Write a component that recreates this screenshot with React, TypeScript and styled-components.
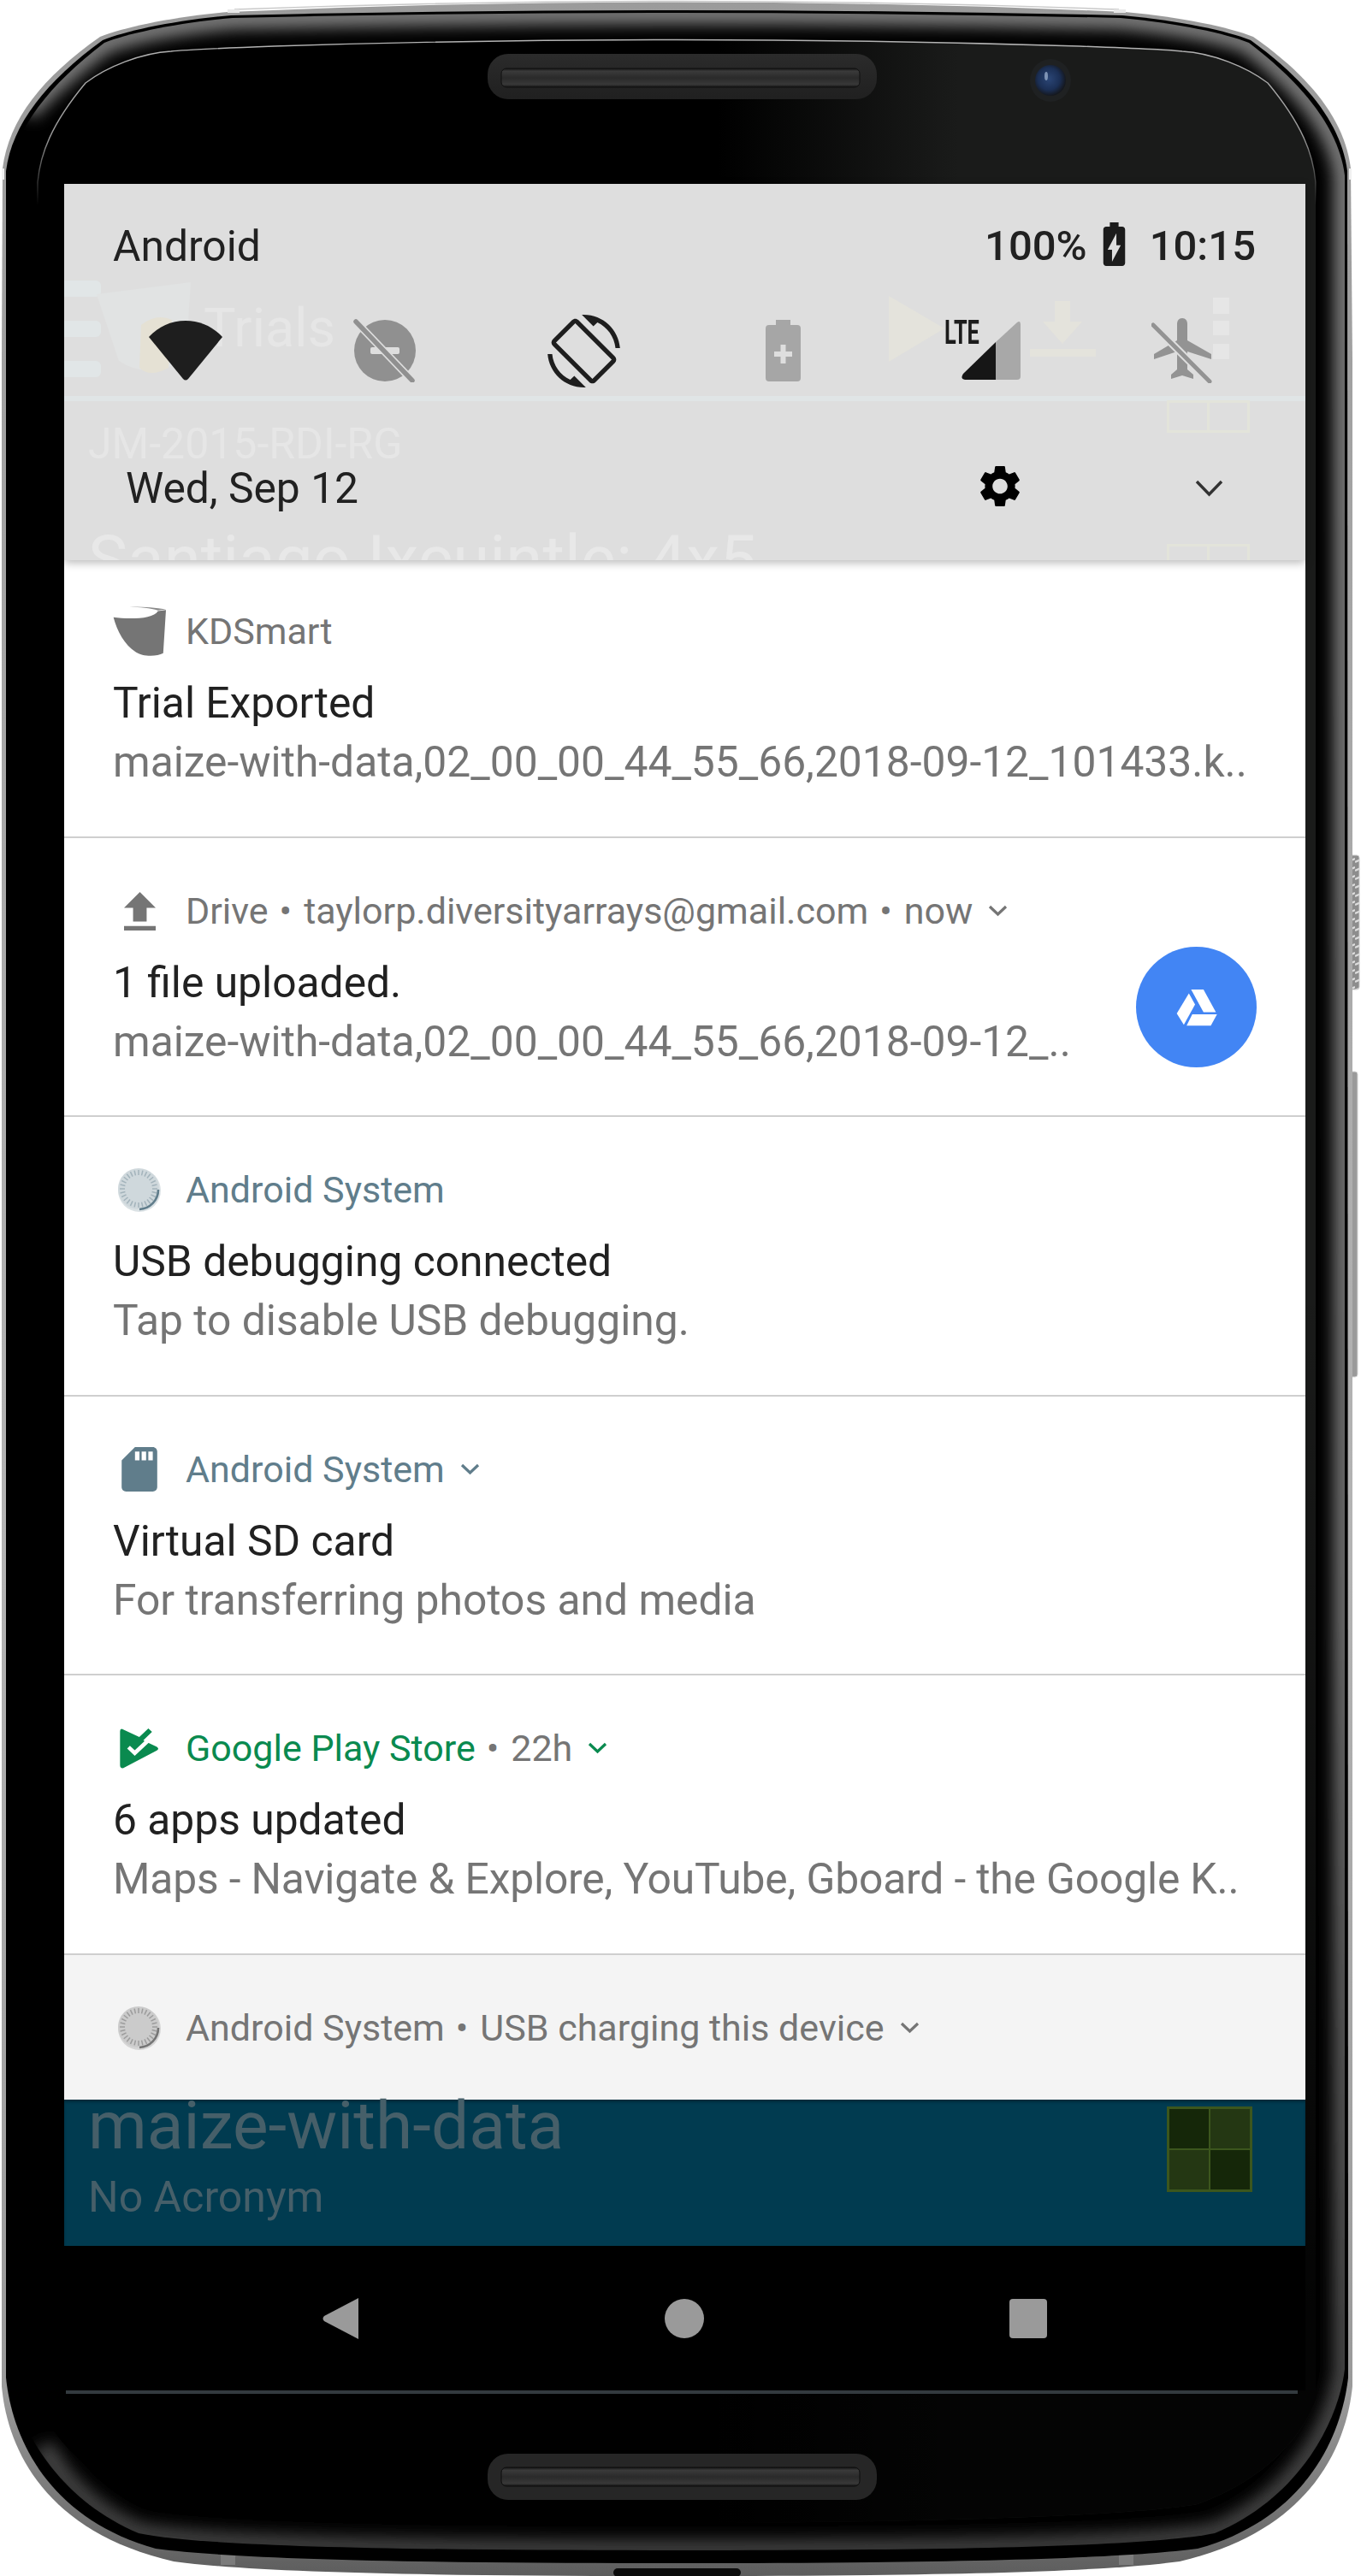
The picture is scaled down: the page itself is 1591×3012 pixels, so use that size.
import React from 'react';
import styled, { createGlobalStyle } from 'styled-components';

const GlobalStyle = createGlobalStyle`
  html, body {
    margin: 0;
    padding: 0;
    background: #ffffff;
    font-family: Roboto, "Liberation Sans", sans-serif;
  }
`;

const Frame = styled.div`
  position: relative;
  width: 1591px;
  height: 3012px;
  box-sizing: border-box;
  padding: 215px 65px 0 75px;
  overflow: hidden;
`;

const FrameArt = styled.svg`
  position: absolute;
  top: 0;
  left: 0;
`;

const Screen = styled.div`
  position: relative;
  display: flex;
  flex-direction: column;
  width: 1451px;
`;

/* quick settings shade */
const Shade = styled.header`
  position: relative;
  z-index: 1;
  height: 440px;
  background: #dedede;
  overflow: hidden;
  box-shadow: 0 3px 10px rgba(0, 0, 0, 0.28);
`;

const GhostMenu = styled.div`
  position: absolute;
  left: 0;
  top: 113px;
  display: flex;
  flex-direction: column;
  gap: 28px;
`;

const GhostBar = styled.div`
  width: 43px;
  height: 19px;
  border-radius: 0 6px 6px 0;
  background: #e1e6e7;
`;

const GhostBucket = styled.svg`
  position: absolute;
  left: 38px;
  top: 115px;
`;

const GhostTrials = styled.div`
  position: absolute;
  left: 163px;
  top: 134px;
  font-size: 63px;
  line-height: 70px;
  color: #e6e6e6;
`;

const GhostRule = styled.div`
  position: absolute;
  left: 0;
  right: 0;
  top: 248px;
  height: 6px;
  background: #e0e5e6;
`;

const GhostCode = styled.div`
  position: absolute;
  left: 28px;
  top: 276px;
  font-size: 50px;
  line-height: 56px;
  color: #e6e6e6;
`;

const GhostPlace = styled.div`
  position: absolute;
  left: 28px;
  top: 400px;
  font-size: 78px;
  line-height: 80px;
  color: #e8e8e8;
`;

const GhostAction = styled.svg`
  position: absolute;
  left: 960px;
  top: 130px;
`;

const GhostThumb = styled.div<{ $top: number; $height: number }>`
  position: absolute;
  left: 1289px;
  top: ${(p) => p.$top}px;
  width: 97px;
  height: ${(p) => p.$height}px;
  box-sizing: border-box;
  border: 3px solid #e3e4da;
  background: linear-gradient(90deg, transparent 48%, #e3e4da 48%, #e3e4da 52%, transparent 52%);
`;

const ShadeContent = styled.div`
  position: relative;
  display: flex;
  flex-direction: column;
  height: 100%;
`;

const StatusRow = styled.div`
  display: flex;
  align-items: center;
  justify-content: space-between;
  height: 146px;
  padding: 0 58px 0 57px;
  font-size: 49.75px;
  line-height: 146px;
  color: #212121;
`;

const StatusRight = styled.div`
  display: flex;
  align-items: center;
  font-size: 49px;
  font-weight: 500;
`;

const BatteryIcon = styled.svg`
  margin: -5px 27px 0 17px;
`;

const QuickRow = styled.div`
  display: grid;
  grid-template-columns: repeat(6, 233px);
  justify-items: center;
  align-items: center;
  height: 98px;
  padding-left: 25px;
`;

const SignalGroup = styled.div`
  position: relative;
  display: flex;
  justify-content: flex-end;
  width: 89px;
  height: 70px;
`;

const LteLabel = styled.span`
  position: absolute;
  left: -11px;
  top: -6px;
  font-size: 39px;
  line-height: 40px;
  font-weight: 700;
  color: #1c1c1c;
  transform: scaleX(0.65);
`;

const DateRow = styled.div`
  display: flex;
  align-items: center;
  height: 168px;
  margin-top: 28px;
  padding: 0 96px 0 72px;
  font-size: 49.75px;
  color: #212121;
`;

const DateText = styled.span`
  flex: 1;
`;

const GearIcon = styled.svg`
  margin: -5px 205px 0 0;
`;

/* notification list */
const Row = styled.article<{ $first?: boolean; $height: number }>`
  display: flex;
  justify-content: space-between;
  box-sizing: border-box;
  height: ${(p) => p.$height}px;
  padding: ${(p) => (p.$first ? 53 : 55)}px 57px 0;
  background: #ffffff;
  border-bottom: 2px solid #cfcfcf;
`;

const SilentRow = styled.article`
  box-sizing: border-box;
  height: 169px;
  padding: 55px 57px 0;
  background: #f4f4f4;
`;

const RowBody = styled.div`
  min-width: 0;
`;

const RowHead = styled.div`
  display: flex;
  align-items: center;
  height: 60px;
  font-size: 43px;
  color: #757575;
  white-space: nowrap;
`;

const IconSlot = styled.div`
  display: flex;
  justify-content: center;
  align-items: center;
  flex: none;
  width: 62px;
  height: 60px;
  margin-right: 23px;
`;

const AppName = styled.span<{ $color?: string }>`
  color: ${(p) => p.$color || '#757575'};
`;

const Dot = styled.span`
  margin: 0 14px 0 13px;
  color: #757575;
`;

const Meta = styled.span`
  color: #757575;
`;

const Caret = styled.svg`
  flex: none;
  margin-left: 18px;
`;

const Title = styled.div`
  margin-top: 19px;
  font-size: 49.75px;
  line-height: 70px;
  color: #212121;
  white-space: nowrap;
`;

const Detail = styled.div`
  font-size: 49.75px;
  line-height: 68px;
  color: #757575;
  white-space: nowrap;
`;

const TightDetail = styled(Detail)`
  letter-spacing: -0.15px;
`;

const DriveBadge = styled.div`
  display: flex;
  align-items: center;
  justify-content: center;
  flex: none;
  width: 141px;
  height: 141px;
  margin-top: 72px;
  border-radius: 50%;
  background: #4285f4;
`;

/* app showing behind the shade */
const BehindStrip = styled.section`
  display: flex;
  justify-content: space-between;
  box-sizing: border-box;
  height: 171px;
  padding: 8px 62px 0 28px;
  background: #013b50;
  box-shadow: inset 0 3px 3px rgba(0, 0, 0, 0.25);
`;

const TrialName = styled.div`
  margin-top: -18px;
  font-size: 78.5px;
  line-height: 80px;
  color: #465f69;
`;

const TrialSub = styled.div`
  margin-top: 16px;
  font-size: 50px;
  line-height: 56px;
  color: #465f69;
`;

const ThumbGrid = styled.div`
  display: grid;
  grid-template-columns: 1fr 1fr;
  grid-template-rows: 1fr 1fr;
  gap: 2px;
  box-sizing: border-box;
  width: 100px;
  height: 100px;
  padding: 3px;
  background: #3c561d;
`;

const ThumbCell = styled.div<{ $dark?: boolean }>`
  background: ${(p) => (p.$dark ? '#152709' : '#243713')};
`;

/* soft keys */
const NavBar = styled.nav`
  display: grid;
  grid-template-columns: repeat(3, 402px);
  justify-content: center;
  justify-items: center;
  align-items: center;
  height: 169px;
  padding-right: 2px;
  background: #000000;
`;

const HomeKey = styled.div`
  width: 46px;
  height: 46px;
  border-radius: 50%;
  background: #9a9a9a;
`;

const RecentsKey = styled.div`
  width: 44px;
  height: 46px;
  border-radius: 4px;
  background: #9a9a9a;
`;

const NavRule = styled.div`
  width: 1440px;
  height: 4px;
  margin-left: 2px;
  background: #333a3f;
`;

const Chevron = ({ color = '#757575' }: { color?: string }) => (
  <Caret width="23" height="14" viewBox="0 0 23 14">
    <polyline points="2,2 11.5,11 21,2" fill="none" stroke={color} strokeWidth="3.2" />
  </Caret>
);

const SystemDial = ({ disc, tick, rim }: { disc: string; tick: string; rim: string }) => (
  <svg width="52" height="52" viewBox="0 0 52 52">
    <circle cx="26" cy="27" r="25" fill={disc} opacity="0.75" />
    <circle cx="25" cy="25" r="24" fill={disc} />
    {Array.from({ length: 28 }).map((_, i) => {
      const a = (i / 28) * Math.PI * 2;
      return (
        <line
          key={i}
          x1={25 + Math.cos(a) * 16}
          y1={25 + Math.sin(a) * 16}
          x2={25 + Math.cos(a) * 22}
          y2={25 + Math.sin(a) * 22}
          stroke={tick}
          strokeWidth="1.5"
        />
      );
    })}
    <path d="M48 26 A 23 23 0 0 1 26 49" fill="none" stroke={rim} strokeWidth="2.6" />
  </svg>
);

const PhoneBody = () => {
  const outer =
    'M2 420 L3 197 C10 140 50 90 117 43 C145 32 200 20 267 14 Q791 -9 1315 14 C1382 20 1437 32 1465 43 C1532 90 1572 140 1579 197 L1581 420 L1581 2790 C1574 2860 1532 2960 1379 2995 C1282 3008 1082 3012 791 3012 C500 3012 300 3008 203 2995 C50 2960 8 2860 2 2790 Z';
  const band =
    'M7 420 L7 200 C14 145 54 95 120 47 C148 36 203 24 270 18 Q791 6 1312 18 C1379 24 1434 36 1462 47 C1528 95 1568 145 1575 200 L1576 2780 C1568 2850 1526 2945 1400 2980 C1300 2993 1082 2997 791 2997 C500 2997 282 2993 182 2980 C56 2945 14 2850 7 2780 Z';
  const bezel =
    'M10 420 L10 205 C17 150 58 99 122 50 C150 39 205 27 272 21 Q791 9 1310 21 C1377 27 1432 39 1460 50 C1524 99 1565 150 1572 205 L1572 2770 C1565 2830 1520 2920 1420 2962 C1340 2978 1100 2982 791 2982 C482 2982 240 2978 162 2962 C62 2920 17 2830 10 2770 Z';
  const glowArc =
    'M30 130 C58 99 100 65 122 50 C150 39 205 27 272 21 Q791 9 1310 21 C1377 27 1432 39 1460 50 C1524 99 1565 150 1572 205 L1572 2770 C1565 2830 1520 2920 1420 2962 C1340 2978 1100 2982 791 2982 C482 2982 240 2978 162 2962 C110 2940 70 2900 50 2860';
  const glass =
    'M44 213 C47 180 60 145 100 97 C125 78 165 62 200 60 C215 58 240 57 320 54 Q791 39 1262 54 C1342 57 1367 58 1382 60 C1417 62 1457 78 1482 97 C1522 145 1535 180 1538 213 L1538 2807 C1525 2840 1490 2895 1400 2928 C1300 2945 1000 2950 791 2950 C582 2950 282 2945 182 2928 C92 2895 57 2840 44 2807 Z';

  return (
    <FrameArt width="1591" height="3012" viewBox="0 0 1591 3012">
      <defs>
        <linearGradient id="metal" gradientUnits="userSpaceOnUse" x1="0" y1="0" x2="0" y2="3012">
          <stop offset="0" stopColor="#9b9b9b" />
          <stop offset="0.6" stopColor="#b4b4b4" />
          <stop offset="0.93" stopColor="#9a9a9a" />
          <stop offset="0.985" stopColor="#6b6b6b" />
          <stop offset="1" stopColor="#5d5d5d" />
        </linearGradient>
        <linearGradient id="edgeGlow" gradientUnits="userSpaceOnUse" x1="0" y1="0" x2="0" y2="3012">
          <stop offset="0" stopColor="#7d7d7d" />
          <stop offset="0.62" stopColor="#707070" />
          <stop offset="0.9" stopColor="#4a4a4a" />
          <stop offset="1" stopColor="#3c3c3c" />
        </linearGradient>
        <linearGradient id="leftGlow" gradientUnits="userSpaceOnUse" x1="0" y1="0" x2="0" y2="3012">
          <stop offset="0" stopColor="#3a3a3a" />
          <stop offset="0.1" stopColor="#666666" />
          <stop offset="0.85" stopColor="#585858" />
          <stop offset="0.95" stopColor="#000000" />
        </linearGradient>
        <linearGradient id="glassFill" gradientUnits="userSpaceOnUse" x1="840" y1="0" x2="1120" y2="0">
          <stop offset="0" stopColor="#000000" />
          <stop offset="1" stopColor="#1a1b1a" />
        </linearGradient>
        <linearGradient id="glassFade" gradientUnits="userSpaceOnUse" x1="0" y1="1500" x2="0" y2="2700">
          <stop offset="0" stopColor="#000000" stopOpacity="0" />
          <stop offset="1" stopColor="#000000" stopOpacity="0.85" />
        </linearGradient>
        <linearGradient id="glassLine" gradientUnits="userSpaceOnUse" x1="0" y1="40" x2="0" y2="240">
          <stop offset="0" stopColor="#b5b5b5" />
          <stop offset="0.6" stopColor="#999999" />
          <stop offset="1" stopColor="#999999" stopOpacity="0" />
        </linearGradient>
        <linearGradient id="grille" x1="0" y1="0" x2="0" y2="1">
          <stop offset="0" stopColor="#161616" />
          <stop offset="0.15" stopColor="#3a3a3a" />
          <stop offset="0.5" stopColor="#2a2a2a" />
          <stop offset="0.85" stopColor="#383838" />
          <stop offset="1" stopColor="#141414" />
        </linearGradient>
        <linearGradient id="speakerWell" x1="0" y1="0" x2="0" y2="1">
          <stop offset="0" stopColor="#2b2b2b" />
          <stop offset="1" stopColor="#202020" />
        </linearGradient>
        <radialGradient id="lens" cx="0.45" cy="0.45" r="0.55">
          <stop offset="0" stopColor="#2b4676" />
          <stop offset="0.65" stopColor="#1b2f55" />
          <stop offset="1" stopColor="#15181f" />
        </radialGradient>
        <pattern id="ridges" width="9" height="10" patternUnits="userSpaceOnUse">
          <rect width="9" height="10" fill="#8d8d8d" />
          <path d="M0 8 L9 4" stroke="#dddddd" strokeWidth="2.4" />
        </pattern>
        <clipPath id="bezelClip">
          <path d={bezel} />
        </clipPath>
        <filter id="soft" x="-5%" y="-5%" width="110%" height="110%">
          <feGaussianBlur stdDeviation="9" />
        </filter>
      </defs>

      <rect x="1578" y="1000" width="11" height="157" rx="3" fill="url(#ridges)" stroke="#cccccc" />
      <rect x="1578" y="1253" width="9" height="357" rx="3" fill="#9a9a9a" stroke="#d5d5d5" />

      <path d={outer} fill="url(#metal)" />
      <path d="M274 11 Q791 -8 1308 11" fill="none" stroke="#c9c9c9" strokeWidth="1.5" />
      <rect x="266" y="11" width="14" height="4" fill="#e8e8e8" />
      <rect x="1302" y="11" width="14" height="4" fill="#e8e8e8" />
      <rect x="2" y="197" width="3" height="13" fill="#f0f0f0" />
      <rect x="1577" y="197" width="3" height="13" fill="#f0f0f0" />
      <rect x="258" y="2985" width="17" height="14" fill="#7c7c7c" />
      <rect x="1308" y="2985" width="17" height="14" fill="#7c7c7c" />

      <path d={band} fill="#000000" />
      <g clipPath="url(#bezelClip)">
        <path d={glowArc} fill="none" stroke="url(#edgeGlow)" strokeWidth="26" filter="url(#soft)" />
        <path d="M44 190 L44 2807" fill="none" stroke="url(#leftGlow)" strokeWidth="22" filter="url(#soft)" />
      </g>
      <path d={glass} fill="url(#glassFill)" />
      <path d={glass} fill="url(#glassFade)" />
      <path d={glass} fill="none" stroke="url(#glassLine)" strokeWidth="1.4" />

      <rect x="570" y="63" width="455" height="53" rx="24" fill="url(#speakerWell)" />
      <rect x="586" y="80" width="419" height="22" rx="6" fill="url(#grille)" stroke="#111111" />
      <rect x="570" y="2869" width="455" height="54" rx="24" fill="#262626" />
      <rect x="586" y="2885" width="419" height="22" rx="6" fill="url(#grille)" stroke="#0d0d0d" />

      <ellipse cx="1228" cy="94" rx="24" ry="25" fill="#1f2122" />
      <circle cx="1228" cy="94" r="18" fill="url(#lens)" />
      <ellipse cx="1223" cy="89" rx="2" ry="5" fill="#7f94b5" />

      <rect x="717" y="3003" width="149" height="10" rx="5" fill="#0c0c0c" />
    </FrameArt>
  );
};

export default function App() {
  return (
    <>
      <GlobalStyle />
      <Frame>
        <PhoneBody />
        <Screen>
          <Shade>
            <GhostMenu>
              <GhostBar />
              <GhostBar />
              <GhostBar />
            </GhostMenu>
            <GhostBucket width="112" height="107" viewBox="0 0 112 107">
              <path d="M0 14 L110 0 L104 90 Q60 115 26 92 Z" fill="#e1e3e3" />
              <path d="M52 50 Q70 36 88 44 L84 100 Q62 112 50 100 Z" fill="#e5e1d4" />
            </GhostBucket>
            <GhostTrials>Trials</GhostTrials>
            <GhostRule />
            <GhostCode>JM-2015-RDI-RG</GhostCode>
            <GhostPlace>Santiago Ixcuintle: 4x5</GhostPlace>
            <GhostAction width="430" height="90" viewBox="0 0 430 90">
              <polygon points="4,1 69,39 4,78" fill="#e4e3dc" />
              <path d="M198 7 H216 V31 H230 L207 57 L184 31 H198 Z" fill="#e4e3dc" />
              <rect x="169" y="63" width="77" height="9" fill="#e4e3dc" />
              <rect x="383" y="3" width="19" height="19" fill="#e6e6e6" />
              <rect x="383" y="30" width="19" height="17" fill="#e6e6e6" />
              <rect x="383" y="57" width="19" height="18" fill="#e6e6e6" />
            </GhostAction>
            <GhostThumb $top={253} $height={38} />
            <GhostThumb $top={421} $height={60} />

            <ShadeContent>
              <StatusRow>
                <span>Android</span>
                <StatusRight>
                  <span>100%</span>
                  <BatteryIcon width="29" height="51" viewBox="7 2 10 20">
                    <path
                      d="M15.67 4H14V2h-4v2H8.33C7.6 4 7 4.6 7 5.33v15.33C7 21.4 7.6 22 8.33 22h7.33c.74 0 1.34-.6 1.34-1.33V5.33C17 4.6 16.4 4 15.67 4zM11 20v-5.5H9L13 7v5.5h2L11 20z"
                      fill="#1c1c1c"
                    />
                  </BatteryIcon>
                  <span>10:15</span>
                </StatusRight>
              </StatusRow>

              <QuickRow>
                <svg width="86" height="70" viewBox="0 0 86 70">
                  <path d="M43 0 C60 0 75 7 86 19 L46 68 Q43 71 40 68 L0 19 C11 7 26 0 43 0 Z" fill="#1e1e1e" />
                </svg>
                <svg width="75" height="74" viewBox="0 0 75 74">
                  <circle cx="38" cy="37" r="36" fill="#909090" />
                  <rect x="21" y="33" width="34" height="8" rx="2" fill="#dedede" />
                  <line x1="4" y1="3" x2="70" y2="72" stroke="#dedede" strokeWidth="9" />
                  <line x1="4" y1="3" x2="70" y2="72" stroke="#909090" strokeWidth="5.5" strokeLinecap="round" />
                </svg>
                <svg width="85" height="85" viewBox="0 0 24 24">
                  <path
                    d="M16.48 2.52c3.27 1.55 5.61 4.72 5.97 8.48h1.5C23.44 4.84 18.29 0 12 0l-.66.03 3.81 3.81 1.33-1.32zm-6.25-.77c-.59-.59-1.54-.59-2.12 0L1.75 8.11c-.59.59-.59 1.54 0 2.12l12.02 12.02c.59.59 1.54.59 2.12 0l6.36-6.36c.59-.59.59-1.54 0-2.12L10.23 1.75zm4.6 19.44L2.81 9.17l6.36-6.36 12.02 12.02-6.36 6.36zm-7.31.29C4.25 19.94 1.91 16.76 1.55 13H.05C.56 19.16 5.71 24 12 24l.66-.03-3.81-3.81-1.33 1.32z"
                    fill="#1e1e1e"
                  />
                </svg>
                <svg width="41" height="72" viewBox="0 0 41 72">
                  <path d="M12 0 H29 V6 H37 Q41 6 41 10 V68 Q41 72 37 72 H4 Q0 72 0 68 V10 Q0 6 4 6 H12 Z" fill="#a6a6a6" />
                  <path d="M17.5 29 H23.5 V37 H31 V43 H23.5 V51 H17.5 V43 H10 V37 H17.5 Z" fill="#dedede" />
                </svg>
                <SignalGroup>
                  <LteLabel>LTE</LteLabel>
                  <svg width="69" height="70" viewBox="0 0 69 70">
                    <path d="M65 2 Q69 -1 69 5 V65 Q69 69 65 69 H40 V25 Z" fill="#a8a8a8" />
                    <path d="M40 25 V69 H4 Q-2 68 2 62 Z" fill="#161616" />
                  </svg>
                </SignalGroup>
                <svg width="72" height="76" viewBox="0 0 72 76">
                  <path
                    d="M70 48 V42 L42 26 V7 C42 3 40 0 36 0 S30 3 30 7 V26 L3 42 V48 L30 39 V60 L23 66 V71 L36 67 L49 71 V66 L42 60 V39 Z"
                    fill="#939393"
                  />
                  <line x1="2" y1="8" x2="68" y2="74" stroke="#dedede" strokeWidth="9" />
                  <line x1="2" y1="8" x2="68" y2="74" stroke="#939393" strokeWidth="5" strokeLinecap="round" />
                </svg>
              </QuickRow>

              <DateRow>
                <DateText>Wed, Sep 12</DateText>
                <GearIcon width="46" height="49" viewBox="2.6 2.4 18.8 19.2">
                  <path
                    d="M19.14,12.94c0.04-0.3,0.06-0.61,0.06-0.94c0-0.32-0.02-0.64-0.07-0.94l2.03-1.58c0.18-0.14,0.23-0.41,0.12-0.61 l-1.92-3.32c-0.12-0.22-0.37-0.29-0.59-0.22l-2.39,0.96c-0.5-0.38-1.03-0.7-1.62-0.94L14.4,2.81c-0.04-0.24-0.24-0.41-0.48-0.41 h-3.84c-0.24,0-0.43,0.17-0.47,0.41L9.25,5.35C8.66,5.59,8.12,5.92,7.63,6.29L5.24,5.33c-0.22-0.08-0.47,0-0.59,0.22L2.74,8.87 C2.62,9.08,2.66,9.34,2.86,9.48l2.03,1.58C4.84,11.36,4.8,11.69,4.8,12s0.02,0.64,0.07,0.94l-2.03,1.58 c-0.18,0.14-0.23,0.41-0.12,0.61l1.92,3.32c0.12,0.22,0.37,0.29,0.59,0.22l2.39-0.96c0.5,0.38,1.03,0.7,1.62,0.94l0.36,2.54 c0.05,0.24,0.24,0.41,0.48,0.41h3.84c0.24,0,0.44-0.17,0.47-0.41l0.36-2.54c0.59-0.24,1.13-0.56,1.62-0.94l2.39,0.96 c0.22,0.08,0.47,0,0.59-0.22l1.92-3.32c0.12-0.22,0.07-0.47-0.12-0.61L19.14,12.94z M12,15.6c-1.98,0-3.6-1.62-3.6-3.6 s1.62-3.6,3.6-3.6s3.6,1.62,3.6,3.6S13.98,15.6,12,15.6z"
                    fill="#000000"
                  />
                </GearIcon>
                <svg width="33" height="20" viewBox="0 0 33 20">
                  <polyline points="2,2 16.5,17 31,2" fill="none" stroke="#333333" strokeWidth="3.4" />
                </svg>
              </DateRow>
            </ShadeContent>
          </Shade>

          <Row $first $height={325}>
            <RowBody>
              <RowHead>
                <IconSlot>
                  <svg width="64" height="60" viewBox="183 45 192 180">
                    <path
                      d="M185 85 C240 92 330 92 346 62 L375 58 L365 215 C340 228 290 228 265 210 C225 185 198 135 185 85 Z"
                      fill="#757575"
                    />
                    <path d="M243 47 C290 46 335 50 375 56 L346 60 C320 52 280 48 243 47 Z" fill="#8a8a8a" />
                  </svg>
                </IconSlot>
                <AppName>KDSmart</AppName>
              </RowHead>
              <Title>Trial Exported</Title>
              <Detail>maize-with-data,02_00_00_44_55_66,2018-09-12_101433.k..</Detail>
            </RowBody>
          </Row>

          <Row $height={326}>
            <RowBody>
              <RowHead>
                <IconSlot>
                  <svg width="37" height="45" viewBox="5 3 14 17">
                    <path d="M9 16h6v-6h4l-7-7-7 7h4zm-4 2h14v2H5z" fill="#757575" />
                  </svg>
                </IconSlot>
                <AppName>Drive</AppName>
                <Dot>•</Dot>
                <Meta>taylorp.diversityarrays@gmail.com</Meta>
                <Dot>•</Dot>
                <Meta>now</Meta>
                <Chevron />
              </RowHead>
              <Title>1 file uploaded.</Title>
              <Detail>maize-with-data,02_00_00_44_55_66,2018-09-12_..</Detail>
            </RowBody>
            <DriveBadge>
              <svg width="48" height="44" viewBox="525 465 146 131">
                <path d="M578 467 H622 L666 547 H622 Z" fill="#ffffff" />
                <path d="M570 480 L592 520 L552 592 L527 552 Z" fill="#ffffff" />
                <path d="M582 555 H670 L648 595 H562 Z" fill="#ffffff" />
              </svg>
            </DriveBadge>
          </Row>

          <Row $height={327}>
            <RowBody>
              <RowHead>
                <IconSlot>
                  <SystemDial disc="#cfd8dc" tick="#a3b3bb" rim="#607d8b" />
                </IconSlot>
                <AppName $color="#607d8b">Android System</AppName>
              </RowHead>
              <Title>USB debugging connected</Title>
              <Detail>Tap to disable USB debugging.</Detail>
            </RowBody>
          </Row>

          <Row $height={326}>
            <RowBody>
              <RowHead>
                <IconSlot>
                  <svg width="42" height="52" viewBox="4 2 16 20">
                    <path
                      d="M18 2h-8L4.02 8 4 20c0 1.1.9 2 2 2h12c1.1 0 2-.9 2-2V4c0-1.1-.9-2-2-2zm-6 6h-2V4h2v4zm3 0h-2V4h2v4zm3 0h-2V4h2v4z"
                      fill="#607d8b"
                    />
                  </svg>
                </IconSlot>
                <AppName $color="#607d8b">Android System</AppName>
                <Chevron color="#607d8b" />
              </RowHead>
              <Title>Virtual SD card</Title>
              <Detail>For transferring photos and media</Detail>
            </RowBody>
          </Row>

          <Row $height={327}>
            <RowBody>
              <RowHead>
                <IconSlot>
                  <svg width="46" height="47" viewBox="50 40 137 142">
                    <path
                      d="M58 42 L118 70 L150 40 L163 52 L132 82 L180 105 Q190 112 180 118 L62 180 Q50 182 50 170 L50 50 Q50 40 58 42 Z"
                      fill="#0a8a4f"
                    />
                    <polyline points="80,106 102,127 152,80" fill="none" stroke="#ffffff" strokeWidth="14" />
                  </svg>
                </IconSlot>
                <AppName $color="#0a8a4f">Google Play Store</AppName>
                <Dot>•</Dot>
                <Meta>22h</Meta>
                <Chevron color="#0a8a4f" />
              </RowHead>
              <Title>6 apps updated</Title>
              <TightDetail>Maps - Navigate &amp; Explore, YouTube, Gboard - the Google K..</TightDetail>
            </RowBody>
          </Row>

          <SilentRow>
            <RowHead>
              <IconSlot>
                <SystemDial disc="#cbcbcb" tick="#9c9c9c" rim="#757575" />
              </IconSlot>
              <AppName>Android System</AppName>
              <Dot>•</Dot>
              <Meta>USB charging this device</Meta>
              <Chevron />
            </RowHead>
          </SilentRow>

          <BehindStrip>
            <div>
              <TrialName>maize-with-data</TrialName>
              <TrialSub>No Acronym</TrialSub>
            </div>
            <ThumbGrid>
              <ThumbCell $dark />
              <ThumbCell />
              <ThumbCell />
              <ThumbCell $dark />
            </ThumbGrid>
          </BehindStrip>

          <NavBar>
            <svg width="42" height="48" viewBox="0 0 42 48">
              <path d="M42 0 V48 L2 27 Q-1 24 2 21 Z" fill="#9a9a9a" />
            </svg>
            <HomeKey />
            <RecentsKey />
          </NavBar>
          <NavRule />
        </Screen>
      </Frame>
    </>
  );
}
